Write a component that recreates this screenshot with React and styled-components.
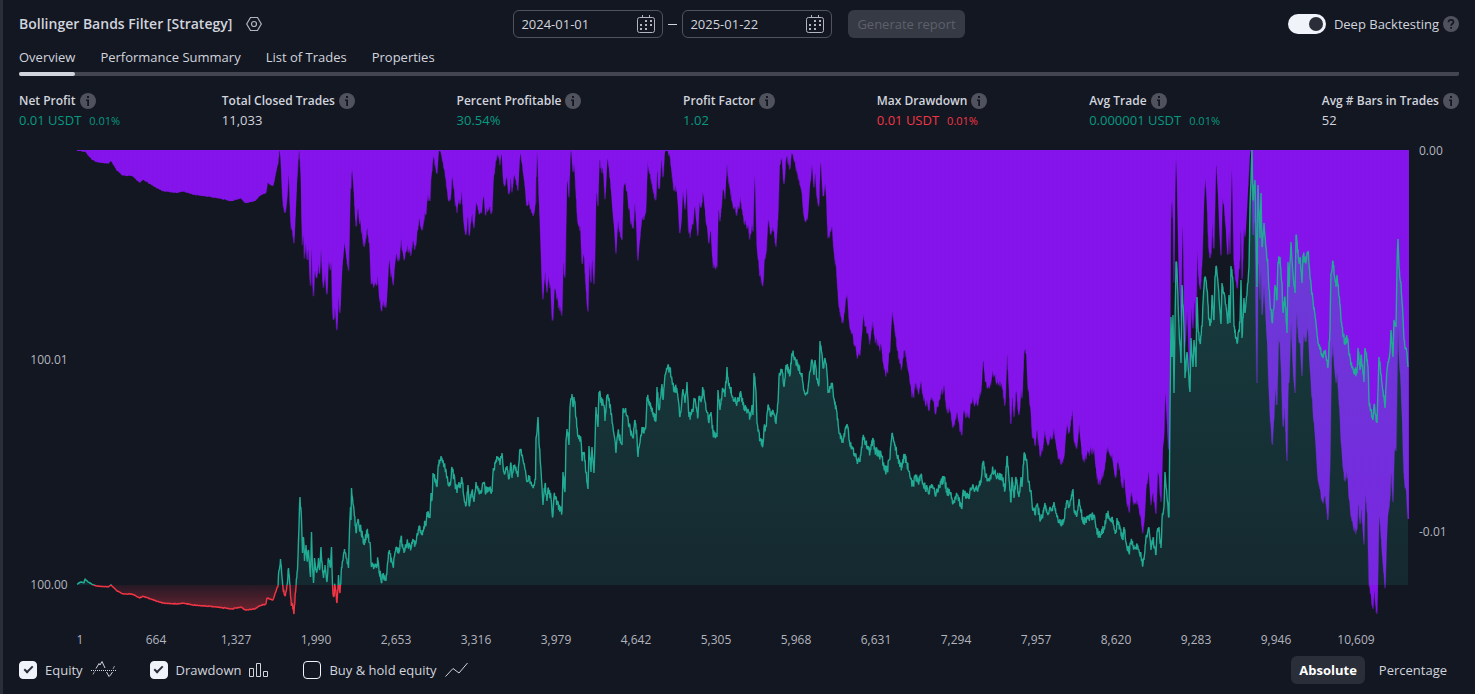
import React, { useState } from 'react';
import styled, { createGlobalStyle, css } from 'styled-components';

const colors = {
    bg: '#131722',
    line: '#434651',
    text: '#d1d4dc',
    muted: '#b2b5be',
    surface: '#2a2e39',
    light: '#f0f3fa',
    up: '#089981',
    down: '#f23645',
    equity: '#22ab94',
    drawdown: '#8613ec',
};

const STATS = [
    { label: 'Net Profit', value: '0.01 USDT', percent: '0.01%', tone: 'up' },
    { label: 'Total Closed Trades', value: '11,033' },
    { label: 'Percent Profitable', value: '30.54%', tone: 'up' },
    { label: 'Profit Factor', value: '1.02', tone: 'up' },
    { label: 'Max Drawdown', value: '0.01 USDT', percent: '0.01%', tone: 'down' },
    { label: 'Avg Trade', value: '0.000001 USDT', percent: '0.01%', tone: 'up' },
    { label: 'Avg # Bars in Trades', value: '52' },
];

const TABS = ['Overview', 'Performance Summary', 'List of Trades', 'Properties'];

const TICKS = [
    '1', '664', '1,327', '1,990', '2,653', '3,316', '3,979', '4,642', '5,305',
    '5,968', '6,631', '7,294', '7,957', '8,620', '9,283', '9,946', '10,609',
];

// equity curve, "x,y" pairs in chart units
const EQUITY = `
77,584 81,582 84,583 85,579 88,582 93,585 97,586 108,587 111,585 117,591 123,594 133,594 137,597 140,598
143,596 150,599 163,603 177,604 183,603 193,605 217,607 232,609 241,607 245,610 255,609 259,606 266,604
267,598 273,600 277,588 278,587 279,570 280.5,559 282,577 283,588 285,596 287,585 288.5,568 290,585 291,600
294,614 296,587 297.5,570 298.5,540 300,497 301.5,520 302.5,553 303.5,537 304.5,561 306,545 307,560
308.5,550 310.5,577 311.5,532 312.5,567 313.5,583 314.5,558 316.5,572 318.5,558 319.5,570 321,547 322.5,570
323.5,578 325,565 327,582 328.5,558 330.5,567 331.5,547 332.5,585 333.5,597 335,585 337,603 338.5,575
340,593 341.5,567 344.5,549 346.5,558 348.5,568 349.5,530 350.5,507 351,520 351.5,488 354,510 356,533
358,519 359.5,530 361,529 364,545 367,532 370,542 371,562 374,568 378,561 381,580 383,577 386,581 389,552
393,566 396,547 399,552 401,537 404,553 407,542 411,548 413,539 415,545 419,526 422,533 425,522 426,525
427,512 429,518 430,518 431,493 432,500 433,473 437,487 438,468 441,456 443,460 445,468 447,478 450,485
452,467 455,483 457,493 459,482 460,488 462,479 464,497 466,506 468,485 469,505 472,491 474,502 476,482
478,490 481,493 483,483 486,492 488,487 492,492 493,473 496,460 498,457 500,465 502,453 504,472 507,466
509,479 511,463 512,478 514,466 518,477 520,449 523,460 525,470 527,482 529,477 533,488 535.5,480 536,438
537,432 538,417 539,443 541,470 542,487 543,505 545,484 547,501 548,488 551,498 552,512 553,515 554,496
557,503 559,508 562,511 563,472 565,492 566,440 567,429 569,445 570,407 572,394 573,407 574,397 576,418
578,437 581,440 582,460 584,452 586,473 588,489 589,446 591,472 592,447 594,473 595,443 596,407 598,427
599,392 601,400 604,405 605,421 607,395 609,398 611,415 613,427 616,453 618,432 622,445 623,409 626,413
629,427 632,435 633,438 635,420 637,437 638,457 640,443 642,427 644,433 646,423 647,397 650,403 653,412
656,420 657,387 659,410 662,384 663,400 665,375 667,369 670,368 672,380 674,392 676,387 678,398 680,417
683,389 685,403 687,382 688,400 689,417 693,412 694,398 698,416 699,396 701,402 703,389 706,410 709,423
711,412 713,433 717,437 718,390 720,410 723,389 725,397 727,367 728,378 730,387 733,398 737,403 741,394
744,410 748,409 750,417 752,405 753,415 754,373 756,392 757,423 760,440 763,444 764,428 766,427 768,405
771,417 773,410 776,424 778,403 779,377 782,369 784,387 786,365 790,375 792,353 795,357 798,368 802,373
804,390 807,392 810,372 812,360 814,375 815,360 817,380 819,384 820,341 822,353 823,368 825,358 827,373
828,393 832,383 834,398 837,413 839,433 843,443 846,426 848,427 849,440 853,448 857,461 860,462 863,437
866,442 870,452 873,438 875,450 882,457 884,468 887,471 890,458 892,433 894,442 897,455 899,463 902,468
904,454 907,463 910,477 913,486 915,478 919,482 921,475 923,483 928,491 932,488 936,495 939,487 944,478
947,492 950,492 953,503 957,495 962,508 963,491 968,498 972,488 977,490 981,483 983,463 986,477 989,480
993,470 997,477 1002,477 1005,490 1007,456 1011,502 1012,477 1014,498 1016,477 1019,497 1021,477 1022,487
1024,454 1027,463 1028,480 1031,490 1032,503 1035,515 1037,505 1041,520 1045,503 1048,515 1050,507 1052,510
1054,502 1058,520 1063,523 1067,500 1069,507 1073,489 1074,510 1077,515 1079,499 1083,522 1088,518 1094,515
1096,528 1099,535 1104,528 1107,513 1113,520 1116,533 1117,518 1120,528 1123,540 1124,527 1126,542 1129,553
1131,542 1135,548 1137,544 1139,550 1143,564 1144,560 1146,537 1149,528 1151,550 1153,538 1156,555 1157,532
1159,527 1161,548 1162,520 1164,507 1165,472 1167,497 1169,517 1170,407 1171,317 1172,357 1173,315 1174,393
1176,262 1177,270 1179,327 1181,363 1182,285 1184,327 1185,378 1187,352 1190,392 1191,338 1193,367 1194,340
1196,367 1197,297 1198,327 1200,343 1202,327 1204,287 1205,277 1207,290 1209,320 1211,323 1212,295 1214,320
1215,277 1216,266 1218,283 1221,324 1222,283 1225,298 1228,323 1229,295 1230,323 1231,266 1233,283 1234,327
1237,343 1240,323 1241,280 1242,338 1244,298 1245,313 1248,283 1249,267 1250,207 1251,180 1252,150 1253,200
1255,180 1256,230 1257,287 1258,185 1260,238 1261,193 1262,247 1264,223 1266,247 1268,267 1269,290 1272,322
1274,307 1275,285 1277,300 1278,262 1280,257 1282,283 1283,312 1285,297 1287,333 1288,262 1289,287 1291,242
1293,273 1295,293 1296,235 1299,263 1300,257 1302,283 1303,255 1306,263 1308,251 1310,277 1313,300 1316,323
1318,343 1323,358 1325,350 1328,367 1330,330 1331,273 1333,261 1336,287 1337,275 1339,297 1342,327 1345,345
1347,337 1350,357 1353,370 1357,373 1358,348 1360,370 1361,355 1364,382 1365,348 1368,367 1369,403 1373,420
1374,405 1377,423 1379,357 1382,383 1385,408 1387,370 1390,353 1391,330 1393,357 1394,320 1396,327 1397,267
1398,239 1399,267 1401,283 1403,317 1404,340 1407,353 1408,367
`.trim().split(/\s+/).map((pair) => pair.split(',').map(Number));

const TOP = 150;
const BASE = 585;
const DRAWDOWN_SCALE = 1.7;

const jitter = (n) => {
    const s = Math.sin(n * 127.1) * 43758.5453;
    return s - Math.floor(s) - 0.5;
};

// fills the gaps between the known points with small moves, like single trades
const addTrades = (points) => {
    const out = [];
    points.forEach(([x, y], i) => {
        out.push([x, y]);
        const next = points[i + 1];
        if (!next) return;
        const steps = Math.floor((next[0] - x) / 0.35);
        const size = x < 275 ? 1 : 9;
        for (let k = 1; k < steps; k += 1) {
            const t = k / steps;
            out.push([x + (next[0] - x) * t, y + (next[1] - y) * t + jitter(x + k) * size]);
        }
    });
    return out;
};

const toPath = (points) => points.map(([x, y], i) => `${i ? 'L' : 'M'}${x.toFixed(1)} ${y.toFixed(1)}`).join('');

const trades = addTrades(EQUITY);
const equityLine = toPath(trades);
const equityArea = `${equityLine}L1408 ${BASE}L77 ${BASE}Z`;

let peak = BASE;
let known = 0;
const drawdowns = trades.map(([x, y]) => {
    while (known < EQUITY.length && EQUITY[known][0] <= x) {
        peak = Math.min(peak, EQUITY[known][1]);
        known += 1;
    }
    return [x, TOP + Math.max(1, (y - peak) * DRAWDOWN_SCALE)];
});

// deepest drawdown around each trade, drawn fainter under the typical one
const deepest = drawdowns.map(([x], i) => {
    const near = drawdowns.slice(Math.max(0, i - 4), i + 5).filter((d) => Math.abs(d[0] - x) <= 1);
    return [x, Math.max(...near.map((d) => d[1]))];
});
const typical = drawdowns.map(([x, y], i) => [x, (y + deepest[i][1]) / 2]);

const toDrawdownArea = (points) => `${toPath(points)}L1409 519L1409 ${TOP}L77 ${TOP}Z`;

const EquityChart = ({ equity, drawdown }) => (
    <ChartSvg viewBox="3 136 1472 516" role="img" aria-label="Equity and drawdown by trade">
        <defs>
            <linearGradient id="gain" x1="0" y1={TOP} x2="0" y2={BASE} gradientUnits="userSpaceOnUse">
                <stop offset="0" stopColor={colors.equity} stopOpacity="0.3" />
                <stop offset="1" stopColor={colors.equity} stopOpacity="0.12" />
            </linearGradient>
            <linearGradient id="loss" x1="0" y1={BASE} x2="0" y2="614" gradientUnits="userSpaceOnUse">
                <stop offset="0" stopColor={colors.down} stopOpacity="0.08" />
                <stop offset="1" stopColor={colors.down} stopOpacity="0.42" />
            </linearGradient>
            <pattern id="bars" width="4" height="8" patternUnits="userSpaceOnUse">
                <rect width="4" height="8" fill={colors.drawdown} />
                <rect width="1" height="8" fill="#8015ea" />
            </pattern>
            <clipPath id="above"><rect x="70" y="140" width="1345" height={BASE - 140} /></clipPath>
            <clipPath id="below"><rect x="70" y={BASE} width="1345" height="60" /></clipPath>
        </defs>
        {drawdown && (
            <>
                <path d={toDrawdownArea(deepest)} fill={colors.drawdown} fillOpacity="0.4" />
                <path d={toDrawdownArea(typical)} fill="url(#bars)" />
            </>
        )}
        {equity && (
            <>
                <g clipPath="url(#above)">
                    <path d={equityArea} fill="url(#gain)" />
                    <CurvePath d={equityLine} stroke={colors.equity} />
                </g>
                <g clipPath="url(#below)">
                    <path d={equityArea} fill="url(#loss)" />
                    <CurvePath d={equityLine} stroke={colors.down} />
                </g>
            </>
        )}
        <AxisText x="49" y="364" textAnchor="middle">100.01</AxisText>
        <AxisText x="49" y="589" textAnchor="middle">100.00</AxisText>
        <AxisText x="1419" y="155">0.00</AxisText>
        <AxisText x="1419" y="536">-0.01</AxisText>
        {TICKS.map((tick, i) => (
            <AxisText key={tick} x={i ? 76 + i * 80 : 80} y="644" textAnchor="middle">{tick}</AxisText>
        ))}
    </ChartSvg>
);

const InfoIcon = () => (
    <svg width="16" height="16" viewBox="0 0 16 16" aria-hidden="true">
        <circle cx="8" cy="8" r="8" fill="#50535e" />
        <path d="M7 3h2v2H7zM6 6.500h3V13H7.200V8H6z" fill={colors.bg} />
    </svg>
);

const HelpIcon = () => (
    <svg width="16" height="16" viewBox="0 0 16 16" aria-hidden="true">
        <circle cx="8" cy="8" r="8" fill="#50535e" />
        <path d="M5.500 6.300C5.500 4.500 6.500 3.800 8 3.800s2.500.9 2.500 2.200c0 1.700-2.400 1.800-2.400 3.700" fill="none" stroke={colors.bg} strokeWidth="1.700" />
        <path d="M7.200 11h1.800v1.800H7.200z" fill={colors.bg} />
    </svg>
);

const SettingsIcon = () => (
    <svg width="16" height="16" viewBox="0 0 16 16" fill="none" stroke="currentColor" aria-hidden="true">
        <path d="M4.500 1.500h7L15.300 8l-3.800 6.500h-7L.7 8z" strokeWidth="1.200" />
        <circle cx="8" cy="8" r="2.500" strokeWidth="1.200" />
    </svg>
);

const CalendarIcon = () => (
    <svg width="18" height="18" viewBox="0 0 18 18" fill="none" stroke="currentColor" aria-hidden="true">
        <rect x="0.500" y="2.500" width="17" height="15" rx="2" />
        <path d="M5.500 0v2.500M12.500 0v2.500" />
        <path d="M8 6h2M13 6h2M3 10h2M8 10h2M13 10h2M3 14h2M8 14h2" strokeWidth="2" />
    </svg>
);

const EquityIcon = () => (
    <svg width="25" height="18" viewBox="0 0 25 18" fill="none" stroke="currentColor" aria-hidden="true">
        <path d="M0 9.500h25" strokeDasharray="1 1" />
        <path d="M5 7.500l3-5 1 1.500 2-3.500L14 7M15.500 11l2.500 4.500 1.500-1.500L21.500 11" />
        <path d="M3.500 10.500l-1.500 3M22 8l1.500-3" strokeOpacity="0.700" />
    </svg>
);

const BarsIcon = () => (
    <svg width="20" height="16" viewBox="0 0 20 16" fill="none" stroke="currentColor" aria-hidden="true">
        <path d="M.5 6.500h4v8h-4zM7.500 1.500h4v13h-4zM14.500 9.500h4v5h-4z" />
    </svg>
);

const LineIcon = () => (
    <svg width="24" height="16" viewBox="0 0 24 16" fill="none" stroke="currentColor" aria-hidden="true">
        <path d="M.5 14.500l7.500-8 6 4.500L22.500 1" />
    </svg>
);

const App = () => {
    const [tab, setTab] = useState('Overview');
    const [unit, setUnit] = useState('Absolute');
    const [deep, setDeep] = useState(true);
    const [from, setFrom] = useState('2024-01-01');
    const [to, setTo] = useState('2025-01-22');
    const [series, setSeries] = useState({ equity: true, drawdown: true, hold: false });

    const toggle = (name) => () => setSeries({ ...series, [name]: !series[name] });

    return (
        <>
            <GlobalStyle />
            <Panel>
                <Header>
                    <Heading>
                        <Title>Bollinger Bands Filter [Strategy]</Title>
                        <IconButton aria-label="Settings"><SettingsIcon /></IconButton>
                    </Heading>
                    <Range>
                        <DateField>
                            <DateInput aria-label="From" value={from} onChange={(e) => setFrom(e.target.value)} />
                            <IconButton aria-label="Pick start date"><CalendarIcon /></IconButton>
                        </DateField>
                        <Dash />
                        <DateField>
                            <DateInput aria-label="To" value={to} onChange={(e) => setTo(e.target.value)} />
                            <IconButton aria-label="Pick end date"><CalendarIcon /></IconButton>
                        </DateField>
                        <ReportButton disabled>Generate report</ReportButton>
                    </Range>
                    <Deep>
                        <DeepLabel>
                            <Switch type="checkbox" role="switch" checked={deep} onChange={() => setDeep(!deep)} />
                            Deep Backtesting
                        </DeepLabel>
                        <HelpIcon />
                    </Deep>
                </Header>
                <Tabs>
                    {TABS.map((name) => (
                        <Tab key={name} $active={name === tab} onClick={() => setTab(name)}>{name}</Tab>
                    ))}
                </Tabs>
                <Stats>
                    {STATS.map(({ label, value, percent, tone }) => (
                        <Stat key={label}>
                            <StatLabel>{label}<InfoIcon /></StatLabel>
                            <StatValue $tone={tone}>
                                {value}
                                {percent && <Percent>{percent}</Percent>}
                            </StatValue>
                        </Stat>
                    ))}
                </Stats>
                <EquityChart equity={series.equity} drawdown={series.drawdown} />
                <Footer>
                    <Legend>
                        <LegendItem>
                            <Checkbox type="checkbox" checked={series.equity} onChange={toggle('equity')} />
                            Equity<EquityIcon />
                        </LegendItem>
                        <LegendItem>
                            <Checkbox type="checkbox" checked={series.drawdown} onChange={toggle('drawdown')} />
                            Drawdown<BarsIcon />
                        </LegendItem>
                        <LegendItem>
                            <Checkbox type="checkbox" checked={series.hold} onChange={toggle('hold')} />
                            Buy &amp; hold equity<LineIcon />
                        </LegendItem>
                    </Legend>
                    <Units>
                        {['Absolute', 'Percentage'].map((name) => (
                            <UnitButton key={name} $active={name === unit} onClick={() => setUnit(name)}>{name}</UnitButton>
                        ))}
                    </Units>
                </Footer>
            </Panel>
        </>
    );
};

const GlobalStyle = createGlobalStyle`
    body {
        margin: 0;
        background: ${colors.bg};
    }
    *, *::before, *::after {
        box-sizing: border-box;
    }
    body, button, input {
        font-family: 'Open Sans', 'Noto Sans', sans-serif;
        font-size: 13px;
        font-weight: 500;
        line-height: 18px;
    }
    svg {
        display: block;
        flex: none;
    }
`;

const Panel = styled.main`
    min-height: 100vh;
    border-left: 3px solid ${colors.surface};
    background: ${colors.bg};
    color: ${colors.text};
`;

const Header = styled.header`
    display: grid;
    grid-template-columns: 1fr auto 1fr;
    align-items: center;
    padding: 10px 16px;
`;

const Heading = styled.div`
    display: flex;
    align-items: center;
    gap: 14px;
`;

const Title = styled.h1`
    margin: 0;
    font-size: 14px;
    font-weight: 600;
`;

const IconButton = styled.button`
    padding: 0;
    border: none;
    background: none;
    color: ${colors.muted};
    cursor: pointer;
`;

const Range = styled.div`
    display: flex;
    align-items: center;
`;

const DateField = styled.div`
    display: flex;
    align-items: center;
    width: 150px;
    height: 28px;
    padding: 0 7px;
    border: 1px solid #50535e;
    border-radius: 6px;
`;

const DateInput = styled.input`
    flex: 1;
    min-width: 0;
    padding: 0;
    border: none;
    outline: none;
    background: none;
    color: ${colors.text};
`;

const Dash = styled.span`
    width: 9px;
    height: 1px;
    margin: 0 5px;
    background: ${colors.text};
`;

const ReportButton = styled.button`
    height: 28px;
    margin-left: 16px;
    padding: 0 9px;
    border: none;
    border-radius: 6px;
    background: #363a45;
    color: #5d606b;
`;

const Deep = styled.div`
    display: flex;
    align-items: center;
    justify-content: flex-end;
    gap: 4px;
`;

const DeepLabel = styled.label`
    display: flex;
    align-items: center;
    gap: 8px;
`;

const Switch = styled.input`
    appearance: none;
    display: flex;
    align-items: center;
    width: 38px;
    height: 20px;
    margin: 0;
    padding: 0 3px;
    border-radius: 10px;
    background: ${colors.line};

    &::after {
        content: '';
        width: 14px;
        height: 14px;
        border-radius: 50%;
        background: ${colors.surface};
    }
    &:checked {
        justify-content: flex-end;
        background: ${colors.light};
    }
`;

const Tabs = styled.nav`
    display: flex;
    gap: 25px;
    margin: 0 16px;
    border-radius: 2px;
    background: linear-gradient(${colors.line}, ${colors.line}) bottom / 100% 4px no-repeat;
`;

const Tab = styled.button`
    padding: 0;
    border: none;
    background: none;
    color: ${colors.text};
    cursor: pointer;

    &::after {
        content: '';
        display: block;
        height: 4px;
        margin-top: 6px;
        border-radius: 2px;
        background: ${({ $active }) => ($active ? colors.text : 'transparent')};
    }
`;

const Stats = styled.section`
    display: flex;
    justify-content: space-between;
    padding: 16px 16px 6px;
`;

const Stat = styled.div`
    white-space: nowrap;
`;

const StatLabel = styled.div`
    display: flex;
    align-items: center;
    gap: 4px;
    font-size: 12px;
    font-weight: 600;
`;

const StatValue = styled.div`
    height: 20px;
    line-height: 20px;
    color: ${({ $tone }) => colors[$tone] || colors.text};
`;

const Percent = styled.span`
    margin-left: 8px;
    font-size: 11px;
`;

const ChartSvg = styled.svg`
    width: 100%;
    height: auto;
`;

const CurvePath = styled.path`
    fill: none;
    stroke-width: 1.4;
    stroke-linejoin: bevel;
`;

const AxisText = styled.text`
    fill: ${colors.muted};
    font-size: 12px;
    font-weight: 500;
`;

const Footer = styled.footer`
    display: flex;
    align-items: center;
    justify-content: space-between;
    padding: 4px 20px 10px 16px;
`;

const Legend = styled.div`
    display: flex;
    gap: 34px;
`;

const LegendItem = styled.label`
    display: flex;
    align-items: center;
    gap: 8px;
`;

const Checkbox = styled.input`
    appearance: none;
    display: flex;
    justify-content: center;
    width: 18px;
    height: 18px;
    margin: 0;
    border: 1px solid ${colors.light};
    border-radius: 4px;

    &:checked {
        background: ${colors.light};
    }
    &:checked::after {
        content: '';
        width: 5px;
        height: 9px;
        margin-top: 2px;
        border: solid ${colors.surface};
        border-width: 0 2px 2px 0;
        transform: rotate(45deg);
    }
`;

const Units = styled.div`
    display: flex;
    gap: 6px;
`;

const UnitButton = styled.button`
    height: 28px;
    padding: 0 8px;
    border: none;
    border-radius: 6px;
    background: none;
    color: ${colors.text};
    cursor: pointer;

    ${({ $active }) => $active && css`
        background: ${colors.surface};
        color: #fff;
        font-weight: 700;
    `}
`;

export default App;
